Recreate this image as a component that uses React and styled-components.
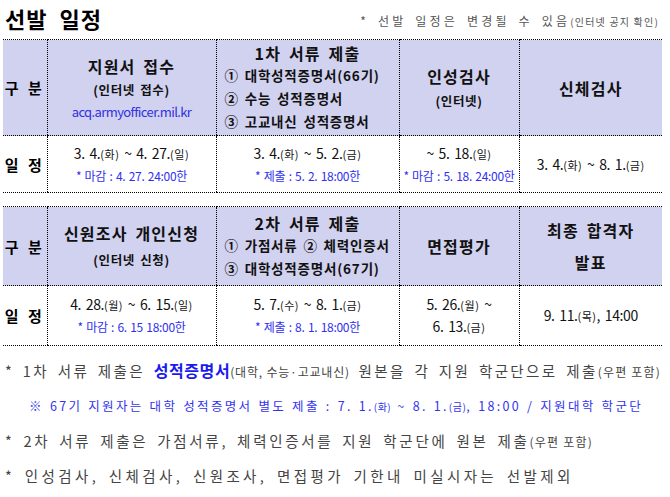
import React from "react";
import styled, { createGlobalStyle } from "styled-components";

const Global = createGlobalStyle`
  html, body { margin: 0; padding: 0; background: #fff; }
  body { font-family: "Noto Sans CJK KR", "Noto Sans", sans-serif; color: #111; }
`;

const Page = styled.div`
  width: 670px;
  height: 497px;
  padding: 0 8px 0 3px;
  box-sizing: border-box;
  overflow: hidden;
`;

const TopBar = styled.div`
  height: 39px;
  display: flex;
  justify-content: space-between;
  align-items: center;
  padding: 0 3px 4px 2px;
  box-sizing: border-box;
`;

const Title = styled.h1`
  margin: 0;
  font-size: 22px;
  font-weight: 700;
  letter-spacing: 1px;
  word-spacing: 6px;
  color: #000;
  line-height: 1;
`;

const Notice = styled.div`
  font-size: 12px;
  color: #555;
  letter-spacing: 3.2px;
  word-spacing: 3px;
  padding-top: 6px;
  white-space: nowrap;
`;

const SmallParen = styled.span`
  font-size: ${(p) => p.$size || 10}px;
  letter-spacing: ${(p) => (p.$ls !== undefined ? p.$ls : 0.5)}px;
  word-spacing: 0;
`;

const Table = styled.table`
  width: 659px;
  border-collapse: collapse;
  table-layout: fixed;
  margin-bottom: ${(p) => p.$gap || 0}px;
`;

const Row = styled.tr`
  height: ${(p) => p.$h}px;
`;

const Cell = styled.td`
  padding: 0;
  text-align: center;
  vertical-align: middle;
  background: ${(p) => (p.$head ? "#d1d1f0" : "#fff")};
  border-top: 1px dotted #000;
  border-bottom: 1px dotted #000;
  border-left: 1px dotted #000;
  &:first-child { border-left: none; }
`;

const Label = styled.div`
  font-size: 15px;
  font-weight: 700;
  letter-spacing: 3px;
  color: #000;
  white-space: nowrap;
`;

const HeadMain = styled.div`
  font-size: 16px;
  font-weight: 700;
  letter-spacing: 1.2px;
  word-spacing: 3px;
  color: #111;
  line-height: ${(p) => p.$lh || 24}px;
  white-space: nowrap;
`;

const HeadSub = styled.div`
  font-size: 12.5px;
  font-weight: 700;
  letter-spacing: 0.6px;
  word-spacing: 2px;
  color: #111;
  line-height: ${(p) => p.$lh || 24}px;
  white-space: nowrap;
`;

const Link = styled.div`
  font-size: 13px;
  color: #3030e0;
  line-height: 20px;
  letter-spacing: -0.6px;
  white-space: nowrap;
`;

const List = styled.div`
  text-align: left;
  padding-left: 8px;
`;

const ListItem = styled.div`
  font-size: 13.5px;
  font-weight: 700;
  letter-spacing: 0.8px;
  word-spacing: 2px;
  line-height: 23px;
  white-space: nowrap;
  color: #111;
`;

const Date = styled.div`
  font-size: 14px;
  color: #111;
  line-height: ${(p) => p.$lh || 22}px;
  letter-spacing: -0.4px;
  word-spacing: 2px;
  white-space: nowrap;
`;

const Due = styled.div`
  font-size: 12px;
  color: #3030f0;
  line-height: 22px;
  letter-spacing: -0.3px;
  word-spacing: 1px;
  white-space: nowrap;
`;

const Notes = styled.div`
  display: flex;
  flex-direction: column;
  padding: 7px 0 0 2px;
`;

const Note = styled.div`
  font-size: ${(p) => (p.$blue ? 12.5 : 14.5)}px;
  line-height: 34px;
  color: ${(p) => (p.$blue ? "#3333ee" : "#444")};
  letter-spacing: ${(p) => p.$ls}px;
  word-spacing: ${(p) => p.$ws || 0}px;
  padding-left: ${(p) => p.$indent || 0}px;
  white-space: nowrap;
`;

const Strong = styled.span`
  color: #1a1aee;
  font-weight: 700;
  letter-spacing: 0.6px;
  font-size: 16px;
`;

const P = ({ children, s, ls }) => (
  <SmallParen $size={s} $ls={ls}>
    {children}
  </SmallParen>
);

const Cols = () => (
  <colgroup>
    <col style={{ width: 44 }} />
    <col style={{ width: 169 }} />
    <col style={{ width: 183 }} />
    <col style={{ width: 120 }} />
    <col style={{ width: 143 }} />
  </colgroup>
);

export default function App() {
  return (
    <>
      <Global />
      <Page>
        <TopBar>
          <Title>선발 일정</Title>
          <Notice>
            * 선발 일정은 변경될 수 있음<P s={10} ls={1.2}>(인터넷 공지 확인)</P>
          </Notice>
        </TopBar>

        <Table $gap={13}>
          <Cols />
          <tbody>
            <Row $h={96}>
              <Cell $head>
                <Label>구 분</Label>
              </Cell>
              <Cell $head>
                <HeadMain $lh={24}>지원서 접수</HeadMain>
                <HeadSub $lh={24}>(인터넷 접수)</HeadSub>
                <Link>acq.armyofficer.mil.kr</Link>
              </Cell>
              <Cell $head>
                <HeadMain $lh={22}>1차 서류 제출</HeadMain>
                <List>
                  <ListItem>① 대학성적증명서(66기)</ListItem>
                  <ListItem>② 수능 성적증명서</ListItem>
                  <ListItem>③ 고교내신 성적증명서</ListItem>
                </List>
              </Cell>
              <Cell $head>
                <HeadMain $lh={26}>인성검사</HeadMain>
                <HeadSub $lh={24}>(인터넷)</HeadSub>
              </Cell>
              <Cell $head>
                <HeadMain>신체검사</HeadMain>
              </Cell>
            </Row>
            <Row $h={57}>
              <Cell>
                <Label>일 정</Label>
              </Cell>
              <Cell>
                <Date>
                  3. 4.<P s={11}>(화)</P> ~ 4. 27.<P s={11}>(일)</P>
                </Date>
                <Due>* 마감 : 4. 27. 24:00한</Due>
              </Cell>
              <Cell>
                <Date>
                  3. 4.<P s={11}>(화)</P> ~ 5. 2.<P s={11}>(금)</P>
                </Date>
                <Due>* 제출 : 5. 2. 18:00한</Due>
              </Cell>
              <Cell>
                <Date>
                  ~ 5. 18.<P s={11}>(일)</P>
                </Date>
                <Due>* 마감 : 5. 18. 24:00한</Due>
              </Cell>
              <Cell>
                <Date>
                  3. 4.<P s={11}>(화)</P> ~ 8. 1.<P s={11}>(금)</P>
                </Date>
              </Cell>
            </Row>
          </tbody>
        </Table>

        <Table>
          <Cols />
          <tbody>
            <Row $h={79}>
              <Cell $head>
                <Label>구 분</Label>
              </Cell>
              <Cell $head>
                <HeadMain $lh={28}>신원조사 개인신청</HeadMain>
                <HeadSub $lh={26}>(인터넷 신청)</HeadSub>
              </Cell>
              <Cell $head>
                <HeadMain $lh={22}>2차 서류 제출</HeadMain>
                <List>
                  <ListItem>① 가점서류 ② 체력인증서</ListItem>
                  <ListItem>③ 대학성적증명서(67기)</ListItem>
                </List>
              </Cell>
              <Cell $head>
                <HeadMain>면접평가</HeadMain>
              </Cell>
              <Cell $head>
                <HeadMain $lh={32}>최종 합격자</HeadMain>
                <HeadMain $lh={32}>발표</HeadMain>
              </Cell>
            </Row>
            <Row $h={60}>
              <Cell>
                <Label>일 정</Label>
              </Cell>
              <Cell>
                <Date>
                  4. 28.<P s={11}>(월)</P> ~ 6. 15.<P s={11}>(일)</P>
                </Date>
                <Due>* 마감 : 6. 15 18:00한</Due>
              </Cell>
              <Cell>
                <Date>
                  5. 7.<P s={11}>(수)</P> ~ 8. 1.<P s={11}>(금)</P>
                </Date>
                <Due>* 제출 : 8. 1. 18:00한</Due>
              </Cell>
              <Cell>
                <Date $lh={21}>
                  5. 26.<P s={11}>(월)</P> ~
                </Date>
                <Date $lh={21}>
                  6. 13.<P s={11}>(금)</P>
                </Date>
              </Cell>
              <Cell>
                <Date>
                  9. 11.<P s={11}>(목)</P>, 14:00
                </Date>
              </Cell>
            </Row>
          </tbody>
        </Table>

        <Notes>
          <Note $ls={2.4} $ws={3}>
            * 1차 서류 제출은 <Strong>성적증명서</Strong>
            <P s={12} ls={0.8}>(대학, 수능·고교내신)</P> 원본을 각 지원 학군단으로 제출
            <P s={12} ls={1.2}>(우편 포함)</P>
          </Note>
          <Note $blue $indent={24} $ls={2.3} $ws={1}>
            ※ 67기 지원자는 대학 성적증명서 별도 제출 : 7. 1.<P s={10}>(화)</P> ~ 8. 1.
            <P s={10}>(금)</P>, 18:00 / 지원대학 학군단
          </Note>
          <Note $ls={2.7} $ws={3}>
            * 2차 서류 제출은 가점서류, 체력인증서를 지원 학군단에 원본 제출
            <P s={12} ls={1.2}>(우편 포함)</P>
          </Note>
          <Note $ls={3.4} $ws={3}>
            * 인성검사, 신체검사, 신원조사, 면접평가 기한내 미실시자는 선발제외
          </Note>
        </Notes>
      </Page>
    </>
  );
}
